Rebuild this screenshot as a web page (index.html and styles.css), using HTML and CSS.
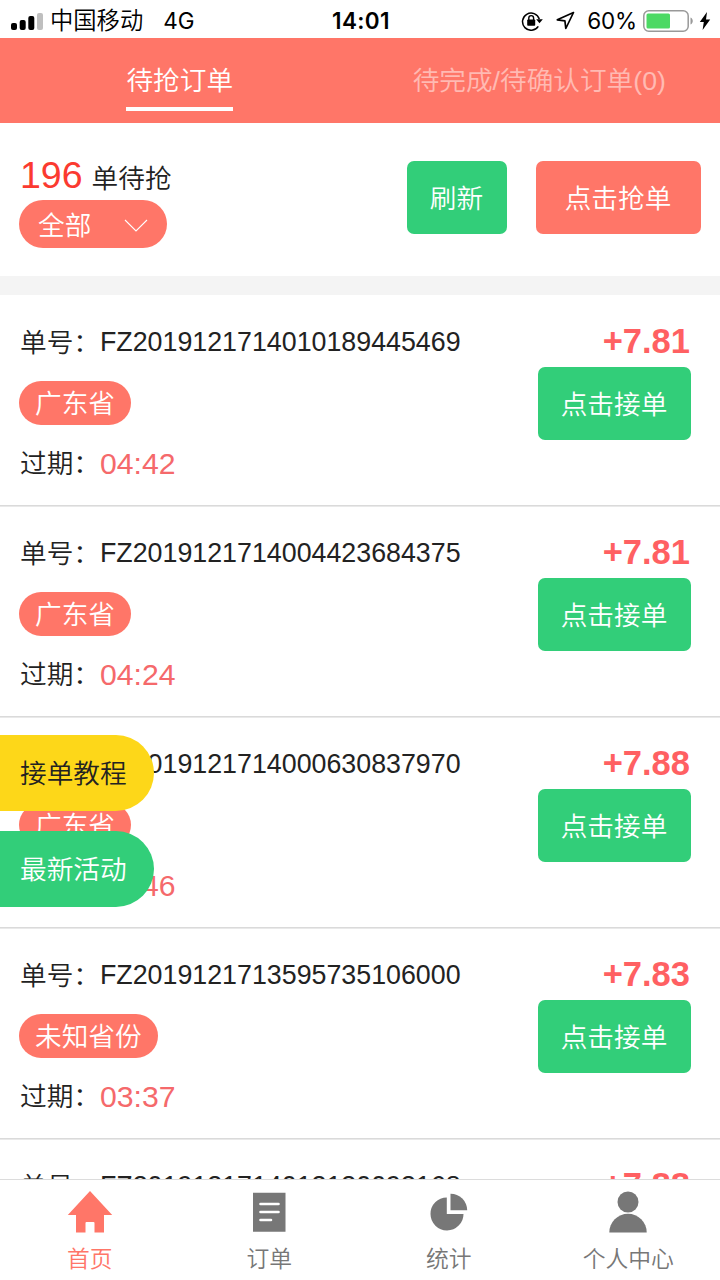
FILE: index.html
```html
<!DOCTYPE html>
<html lang="zh-CN">
<head>
<meta charset="utf-8">
<title>待抢订单</title>
<link rel="stylesheet" href="styles.css">
</head>
<body>
<div class="app">
  <header class="status">
    <div class="status-left">
      <svg class="signal" width="32" height="20" viewBox="0 0 32 20"><rect x="0" y="12" width="6" height="7" rx="2"/><rect x="8.7" y="9" width="6" height="10" rx="2"/><rect x="17.3" y="5" width="6" height="14" rx="2"/><rect x="26" y="2" width="6" height="17" rx="2" fill="#bfbfbf"/></svg>
      <span class="carrier">中国移动</span><span class="net">4G</span>
    </div>
    <span class="clock">14:01</span>
    <div class="status-right">
      <svg class="lock" width="22" height="20" viewBox="0 0 22 20"><path d="M17.3 15.4A8.6 8.6 0 1 1 18.3 8" fill="none" stroke="#000" stroke-width="1.5"/><path d="M15.2 8.3h6.6l-3.3 4z"/><rect x="6.2" y="8.5" width="8" height="6.2" rx=".8"/><path d="M7.8 9V7a2.4 2.4 0 0 1 4.8 0v2" fill="none" stroke="#000" stroke-width="1.4"/></svg>
      <svg class="arrow" width="19" height="19" viewBox="0 0 19 19"><path d="M17.500 1.500 1.300 8.800l7.600 1 .9 7.700z" fill="none" stroke="#000" stroke-width="1.700" stroke-linejoin="round"/></svg>
      <span class="percent">60%</span>
      <svg class="battery" width="51" height="22" viewBox="0 0 51 22"><rect x=".8" y=".8" width="44.4" height="20.4" rx="5" fill="none" stroke="#999" stroke-width="1.5"/><rect x="3.5" y="3.5" width="23.5" height="15" rx="1.5" fill="#4cd964"/><path d="M47.5 7.5c3 1.2 3 5.800 0 7z" fill="#999"/></svg>
      <svg class="bolt" width="12" height="20" viewBox="0 0 12 20"><path d="M8 1 .8 11h4L3.600 19 11.200 8.500H7z"/></svg>
    </div>
  </header>

  <nav class="tabs">
    <div class="tab"><span class="tab-label active">待抢订单</span></div>
    <div class="tab"><span class="tab-label">待完成/待确认订单(0)</span></div>
  </nav>

  <section class="summary">
    <div class="summary-info">
      <div class="count"><b>196</b><span>单待抢</span></div>
      <div class="filter"><span>全部</span><svg width="24" height="14" viewBox="0 0 24 14"><path d="m1 1 11 11L23 1" fill="none" stroke="#fff" stroke-width="1.1"/></svg></div>
    </div>
    <button class="btn refresh">刷新</button>
    <button class="btn grab">点击抢单</button>
  </section>

  <main class="list">
    <article class="order">
      <div class="details"><p class="line">单号：<span>FZ2019121714010189445469</span></p><span class="pill">广东省</span><p class="line">过期：<span class="time">04:42</span></p></div>
      <div class="side"><strong>+7.81</strong><button class="btn take">点击接单</button></div>
    </article>
    <article class="order">
      <div class="details"><p class="line">单号：<span>FZ2019121714004423684375</span></p><span class="pill">广东省</span><p class="line">过期：<span class="time">04:24</span></p></div>
      <div class="side"><strong>+7.81</strong><button class="btn take">点击接单</button></div>
    </article>
    <article class="order">
      <div class="details"><p class="line">单号：<span>FZ2019121714000630837970</span></p><span class="pill">广东省</span><p class="line">过期：<span class="time">03:46</span></p></div>
      <div class="side"><strong>+7.88</strong><button class="btn take">点击接单</button></div>
    </article>
    <article class="order">
      <div class="details"><p class="line">单号：<span>FZ2019121713595735106000</span></p><span class="pill">未知省份</span><p class="line">过期：<span class="time">03:37</span></p></div>
      <div class="side"><strong>+7.83</strong><button class="btn take">点击接单</button></div>
    </article>
    <article class="order">
      <div class="details"><p class="line">单号：<span>FZ2019121714012130093168</span></p></div>
      <div class="side"><strong>+7.88</strong></div>
    </article>
  </main>

  <aside class="floats">
    <a class="float tutorial">接单教程</a>
    <a class="float events">最新活动</a>
  </aside>

  <footer class="bottom">
    <a class="item current"><svg width="46" height="44" viewBox="0 0 46 44"><path d="M23 1 45.200 25H37v17.500H27.500V33q0-1-1-1h-7q-1 0-1 1v9.500H9V25H.8z" fill="currentColor"/></svg>首页</a>
    <a class="item"><svg width="46" height="44" viewBox="0 0 46 44"><path d="M7 2.700h32.500v39H7z" fill="currentColor"/><path d="M14.500 14h18M14.500 22h18M14.500 30h10.500" stroke="#fff" stroke-width="2.600" stroke-linecap="round"/></svg>订单</a>
    <a class="item"><svg width="46" height="44" viewBox="0 0 46 44"><path d="M20.800 7.400A16.500 16.500 0 1 0 37.500 23.900H20.800z" fill="currentColor"/><path d="M24.500 3.800A16.500 16.500 0 0 1 41.200 20.300H24.500z" fill="currentColor"/></svg>统计</a>
    <a class="item"><svg width="46" height="44" viewBox="0 0 46 44"><circle cx="23" cy="12" r="10.500" fill="currentColor"/><path d="M4.300 42.500a18.700 18.700 0 0 1 37.400 0z" fill="currentColor"/></svg>个人中心</a>
  </footer>
</div>
</body>
</html>
```

FILE: styles.css
```css
* { box-sizing: border-box; }
body {
  margin: 0;
  background: #fff;
  color: #222;
  font: 350 26.67px "Liberation Sans", "Noto Sans CJK SC", sans-serif;
}
svg { display: block; flex: none; }
p { margin: 0; }
.app {
  position: relative;
  width: 720px;
  height: 1280px;
  display: flex;
  flex-direction: column;
  overflow: hidden;
}
.status {
  height: 38px;
  flex: none;
  display: grid;
  grid-template-columns: 1fr auto 1fr;
  align-items: center;
  padding: 2px 9px 0 11px;
  color: #000;
  font: 400 22.5px/36px Inter, "Noto Sans CJK SC", sans-serif;
}
.status-left, .status-right { display: flex; align-items: center; }
.status-right { justify-content: flex-end; }
.signal { margin-right: 7px; }
.carrier { font-size: 23.3px; font-weight: 350; padding-top: 1px; }
.net { margin-left: 20px; }
.clock { font-weight: 600; font-size: 22.5px; letter-spacing: 0.4px; }
.arrow { margin: 0 12px 0 13px; }
.percent { letter-spacing: -0.2px; }
.battery { margin: 0 5px 0 6px; }
.tabs {
  height: 85px;
  flex: none;
  display: grid;
  grid-template-columns: 1fr 1fr;
  padding-right: 1px;
  background: #ff7668;
}
.tab { display: flex; justify-content: center; align-items: flex-start; }
.tab-label {
  height: 73px;
  padding-top: 23px;
  line-height: 40px;
  color: rgba(255, 255, 255, 0.5);
}
.tab-label.active { color: #fff; border-bottom: 4px solid #fff; }
.summary {
  height: 172px;
  flex: none;
  display: flex;
  padding: 38px 19px 0;
  border-bottom: 19px solid #f4f4f4;
}
.summary-info { flex: 1; }
.count { height: 39px; display: flex; align-items: baseline; line-height: 29px; padding-left: 1px; }
.count b { font-size: 37.5px; font-weight: 400; color: #fb3a30; }
.count span { margin-left: 9px; padding-top: 1px; }
.filter {
  width: 148px;
  height: 48px;
  border-radius: 24px;
  display: flex;
  align-items: center;
  justify-content: space-between;
  padding: 0 19px 0 19px;
  background: #ff7668;
  color: #fff;
}
.filter span { padding-bottom: 2px; }
.filter svg { margin-top: 4px; }
.btn {
  height: 73px;
  padding: 0 1px 2px 0;
  border: 0;
  border-radius: 7px;
  background: #32ce79;
  color: #fff;
  font: inherit;
}
.refresh { width: 100px; margin-right: 29px; }
.grab { width: 165px; background: #ff7668; }
.list { flex: 1; min-height: 0; overflow: hidden; }
.order {
  height: 211px;
  display: flex;
  justify-content: space-between;
  padding: 27px 29px 0 19px;
  box-shadow: inset 0 -1px #dadada, 0 1px #e9e9e9;
}
.details { display: flex; flex-direction: column; align-items: flex-start; }
.line { height: 40px; line-height: 42px; display: flex; padding-left: 1px; }
.line span { font-weight: 400; font-size: 26.8px; line-height: 40px; }
.line .time { font-size: 30.2px; line-height: 42px; color: #f5696b; }
.pill {
  height: 44px;
  margin: 19px 0 18px;
  padding: 0 16px;
  border-radius: 22px;
  background: #ff7668;
  color: #fff;
  line-height: 47px;
}
.side { width: 153px; text-align: right; }
.side strong { display: block; height: 45px; padding-right: 1px; line-height: 38px; font-size: 34.5px; font-weight: 700; color: #ff6062; }
.take { width: 153px; }
.floats {
  position: absolute;
  left: 0;
  top: 735px;
  display: grid;
  gap: 20px;
}
.float {
  width: 154px;
  height: 76px;
  padding-left: 20px;
  border-radius: 0 38px 38px 0;
  line-height: 79px;
}
.tutorial { background: #fdd719; color: #222; }
.events { background: #32ce79; color: #fff; }
.bottom {
  height: 101px;
  flex: none;
  display: grid;
  grid-template-columns: repeat(4, 1fr);
  padding-right: 2px;
  border-top: 1px solid #dcdcdc;
  background: #fff;
  color: #777;
  font-size: 22.8px;
}
.item { display: flex; flex-direction: column; align-items: center; padding-top: 10px; line-height: 34px; gap: 8px; }
.current { color: #ff7668; }
```
